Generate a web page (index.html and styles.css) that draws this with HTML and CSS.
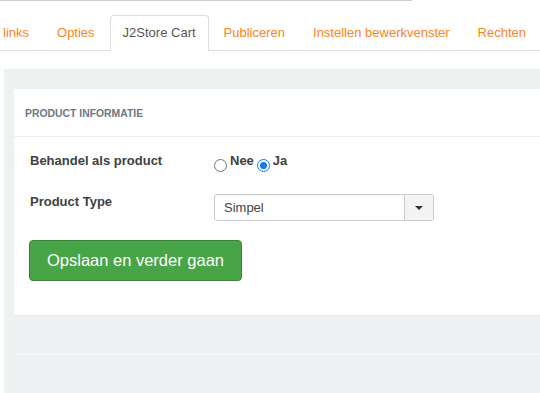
FILE: index.html
```html
<!DOCTYPE html>
<html lang="nl">
<head>
<meta charset="utf-8">
<title>J2Store Cart</title>
<link rel="stylesheet" href="styles.css">
</head>
<body>
<div class="topline"></div>
<ul class="tabs">
  <li class="tab"><a>links</a></li>
  <li class="tab"><a>Opties</a></li>
  <li class="tab active"><a>J2Store Cart</a></li>
  <li class="tab"><a>Publiceren</a></li>
  <li class="tab"><a>Instellen bewerkvenster</a></li>
  <li class="tab"><a>Rechten</a></li>
</ul>
<div class="well">
  <div class="panel">
    <div class="panel-head">PRODUCT INFORMATIE</div>
    <div class="panel-body">
      <div class="row row-radio">
        <div class="label">Behandel als product</div>
        <div class="control radios">
          <label class="radio"><span class="rb"></span><span class="rt">Nee</span></label>
          <label class="radio"><span class="rb checked"></span><span class="rt">Ja</span></label>
        </div>
      </div>
      <div class="row row-select">
        <div class="label">Product Type</div>
        <div class="control">
          <div class="select">
            <span class="select-text">Simpel</span>
            <span class="select-btn"><span class="caret"></span></span>
          </div>
        </div>
      </div>
      <button class="btn-save">Opslaan en verder gaan</button>
    </div>
  </div>
  <div class="footer-line"></div>
</div>
</body>
</html>
```
FILE: styles.css
```css
html, body {
  margin: 0;
  padding: 0;
  background: #fff;
  font-family: "Liberation Sans", Arial, sans-serif;
  overflow: hidden;
}
body {
  width: 540px;
  height: 393px;
}
.topline {
  width: 412px;
  height: 1px;
  background: #cfcfcf;
}
.tabs {
  list-style: none;
  margin: 14px 0 0 -10px;
  padding: 0;
  display: flex;
  border-bottom: 1px solid #dddddd;
  height: 35px;
  white-space: nowrap;
}
.tab {
  margin-right: 2px;
  margin-bottom: -1px;
  flex-shrink: 0;
}
.tab a {
  display: block;
  height: 34px;
  line-height: 34px;
  padding: 0 12px;
  font-size: 13px;
  color: #f7841c;
  border: 1px solid transparent;
  border-bottom: none;
  border-radius: 4px 4px 0 0;
}
.tab.active a {
  color: #555555;
  background: #fff;
  border-color: #dddddd;
  height: 35px;
}
.well {
  box-sizing: border-box;
  margin: 18px 0 0 4px;
  background: #eef1f2;
  padding: 20px 0 0 10px;
  height: 324px;
}
.panel {
  background: #fff;
  border-bottom: 1px solid #e4e7e8;
  height: 226px;
}
.panel-head {
  height: 47px;
  line-height: 49px;
  padding-left: 11px;
  font-size: 10.4px;
  font-weight: bold;
  color: #6b7886;
  border-bottom: 1px solid #eceff0;
}
.panel-body {
  padding: 15px 0 0 16px;
}
.row {
  display: flex;
}
.label {
  width: 184px;
  font-size: 13px;
  font-weight: bold;
  color: #404040;
  line-height: 18px;
}
.row-radio {
  height: 42px;
}
.row-select {
  height: 46px;
}
.row-select .label {
  line-height: 16px;
}
.radios {
  display: flex;
}
.radio {
  display: flex;
  align-items: flex-start;
  margin-right: 3px;
}
.rb {
  width: 11px;
  height: 11px;
  border: 1px solid #767676;
  border-radius: 50%;
  margin-top: 7px;
  margin-right: 3px;
  background: #fff;
  position: relative;
}
.rb.checked {
  border-color: #1a73e8;
}
.rb.checked::after {
  content: "";
  position: absolute;
  left: 2px;
  top: 2px;
  width: 7px;
  height: 7px;
  border-radius: 50%;
  background: #1a73e8;
}
.rt {
  font-size: 13px;
  font-weight: bold;
  color: #404040;
  line-height: 18px;
}
.select {
  width: 218px;
  height: 25px;
  border: 1px solid #cccccc;
  border-radius: 3px;
  display: flex;
  box-shadow: inset 0 1px 1px rgba(0,0,0,0.04);
}
.select-text {
  flex: 1;
  padding-left: 9px;
  line-height: 25px;
  font-size: 13px;
  color: #444;
}
.select-btn {
  width: 28px;
  border-left: 1px solid #cccccc;
  background: #f3f3f3;
  display: flex;
  align-items: center;
  justify-content: center;
  border-radius: 0 3px 3px 0;
}
.caret {
  width: 0;
  height: 0;
  border-left: 4px solid transparent;
  border-right: 4px solid transparent;
  border-top: 4px solid #333;
}
.btn-save {
  display: block;
  margin-left: -1px;
  width: 213px;
  height: 41px;
  background: #47a447;
  border: 1px solid #398439;
  border-radius: 4px;
  color: #fff;
  font-family: "Liberation Sans", Arial, sans-serif;
  font-size: 16.5px;
  padding: 0;
}
.footer-line {
  margin-top: 38px;
  height: 1px;
  background: #f8fafa;
}
```
